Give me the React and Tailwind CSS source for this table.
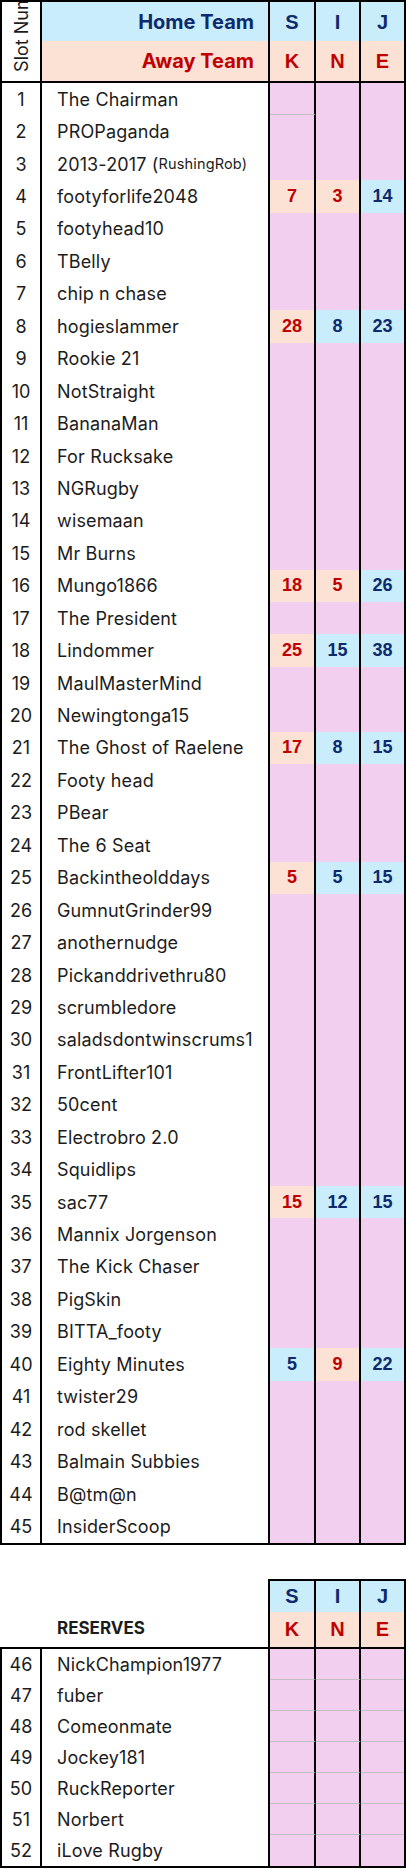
const players = [
  'The Chairman',
  'PROPaganda',
  '2013-2017',
  'footyforlife2048',
  'footyhead10',
  'TBelly',
  'chip n chase',
  'hogieslammer',
  'Rookie 21',
  'NotStraight',
  'BananaMan',
  'For Rucksake',
  'NGRugby',
  'wisemaan',
  'Mr Burns',
  'Mungo1866',
  'The President',
  'Lindommer',
  'MaulMasterMind',
  'Newingtonga15',
  'The Ghost of Raelene',
  'Footy head',
  'PBear',
  'The 6 Seat',
  'Backintheolddays',
  'GumnutGrinder99',
  'anothernudge',
  'Pickanddrivethru80',
  'scrumbledore',
  'saladsdontwinscrums1',
  'FrontLifter101',
  '50cent',
  'Electrobro 2.0',
  'Squidlips',
  'sac77',
  'Mannix Jorgenson',
  'The Kick Chaser',
  'PigSkin',
  'BITTA_footy',
  'Eighty Minutes',
  'twister29',
  'rod skellet',
  'Balmain Subbies',
  'B@tm@n',
  'InsiderScoop',
]

const reserves = [
  'NickChampion1977',
  'fuber',
  'Comeonmate',
  'Jockey181',
  'RuckReporter',
  'Norbert',
  'iLove Rugby',
]

// r = away (red on peach), b = home (navy on blue)
const scores = {
  4: [['7', 'r'], ['3', 'r'], ['14', 'b']],
  8: [['28', 'r'], ['8', 'b'], ['23', 'b']],
  16: [['18', 'r'], ['5', 'r'], ['26', 'b']],
  18: [['25', 'r'], ['15', 'b'], ['38', 'b']],
  21: [['17', 'r'], ['8', 'b'], ['15', 'b']],
  25: [['5', 'r'], ['5', 'b'], ['15', 'b']],
  35: [['15', 'r'], ['12', 'b'], ['15', 'b']],
  40: [['5', 'b'], ['9', 'r'], ['22', 'b']],
}

const colWidths = ['w-[46px] border-r-2 border-black', 'w-[45px] border-r-2 border-black', 'flex-1']

const ScoreCell = ({ score, width, line }) => {
  let tone = 'bg-[#f2ceef]'
  if (score && score[1] === 'r') tone = 'bg-[#fbe2d5] text-[#c00000]'
  if (score && score[1] === 'b') tone = 'bg-[#caedfb] text-[#0c2a6c]'
  return (
    <div
      className={`flex items-center justify-center font-['Liberation_Sans',Arial,sans-serif] text-[18px] font-bold ${width} ${tone} ${
        line ? 'border-b border-b-[#bfbfbf]' : ''
      }`}>
      {score ? score[0] : ''}
    </div>
  )
}

const Row = ({ slot, name, height, lines }) => {
  const score = scores[slot]
  return (
    <div className={`flex ${height}`}>
      <div className="flex w-[40px] shrink-0 items-center justify-center border-r-2 border-black">
        {slot}
      </div>
      <div className="flex w-[228px] shrink-0 items-center whitespace-nowrap border-r-2 border-black pl-[15px] tracking-[0.15px]">
        {slot === 3 ? (
          <>
            {name} (<span className="text-[14.5px]">RushingRob)</span>
          </>
        ) : (
          name
        )}
      </div>
      {colWidths.map((w, i) => (
        <ScoreCell
          key={i}
          width={w}
          score={score ? score[i] : null}
          line={lines === 'all' || (slot === 1 && i === 0)}
        />
      ))}
    </div>
  )
}

const LetterRow = ({ letters, height }) => (
  <>
    {letters.map((l, i) => (
      <div
        key={l}
        className={`flex ${height} items-center justify-center font-['Liberation_Sans',Arial,sans-serif] text-[20px] font-bold ${colWidths[i]}`}>
        {l}
      </div>
    ))}
  </>
)

export default function App() {
  return (
    <div className="w-[407px] bg-white font-['Inter','Liberation_Sans',sans-serif] text-[18px] text-[#1c1c1c]">
      <div className="w-[406px] border-2 border-black">
        <div className="flex border-b-2 border-black">
          <div className="flex h-[79px] w-[40px] shrink-0 flex-col items-center justify-end overflow-hidden border-r-2 border-black pb-[9px]">
            <span className="rotate-180 whitespace-nowrap [writing-mode:vertical-rl]">
              Slot Number
            </span>
          </div>
          <div className="flex-1">
            <div className="flex h-[39px] bg-[#caedfb] text-[#0c2a6c]">
              <div className="flex w-[228px] shrink-0 items-center justify-end border-r-2 border-black pr-[14px] text-[20px] font-bold">
                Home Team
              </div>
              <LetterRow letters={['S', 'I', 'J']} height="h-[39px]" />
            </div>
            <div className="flex h-[40px] bg-[#fbe2d5] text-[#c00000]">
              <div className="flex w-[228px] shrink-0 items-center justify-end border-r-2 border-black pr-[14px] text-[20px] font-bold">
                Away Team
              </div>
              <LetterRow letters={['K', 'N', 'E']} height="h-[40px]" />
            </div>
          </div>
        </div>
        {players.map((p, i) => (
          <Row key={p} slot={i + 1} name={p} height="h-[32.44px]" />
        ))}
      </div>

      <div className="mt-[34px] flex">
        <div className="flex w-[268px] shrink-0 flex-col justify-end">
          <div className="flex h-[35px] items-center pl-[57px] text-[17px] font-bold">RESERVES</div>
        </div>
        <div className="w-[138px] border-x-2 border-t-2 border-black">
          <div className="flex h-[31px] bg-[#caedfb] text-[#0c2a6c]">
            <LetterRow letters={['S', 'I', 'J']} height="h-[31px]" />
          </div>
          <div className="flex h-[35px] bg-[#fbe2d5] text-[#c00000]">
            <LetterRow letters={['K', 'N', 'E']} height="h-[35px]" />
          </div>
        </div>
      </div>
      <div className="w-[406px] border-2 border-black">
        {reserves.map((p, i) => (
          <Row key={p} slot={i + 46} name={p} height="h-[31px]" lines={i < 6 ? 'all' : ''} />
        ))}
      </div>
    </div>
  )
}
